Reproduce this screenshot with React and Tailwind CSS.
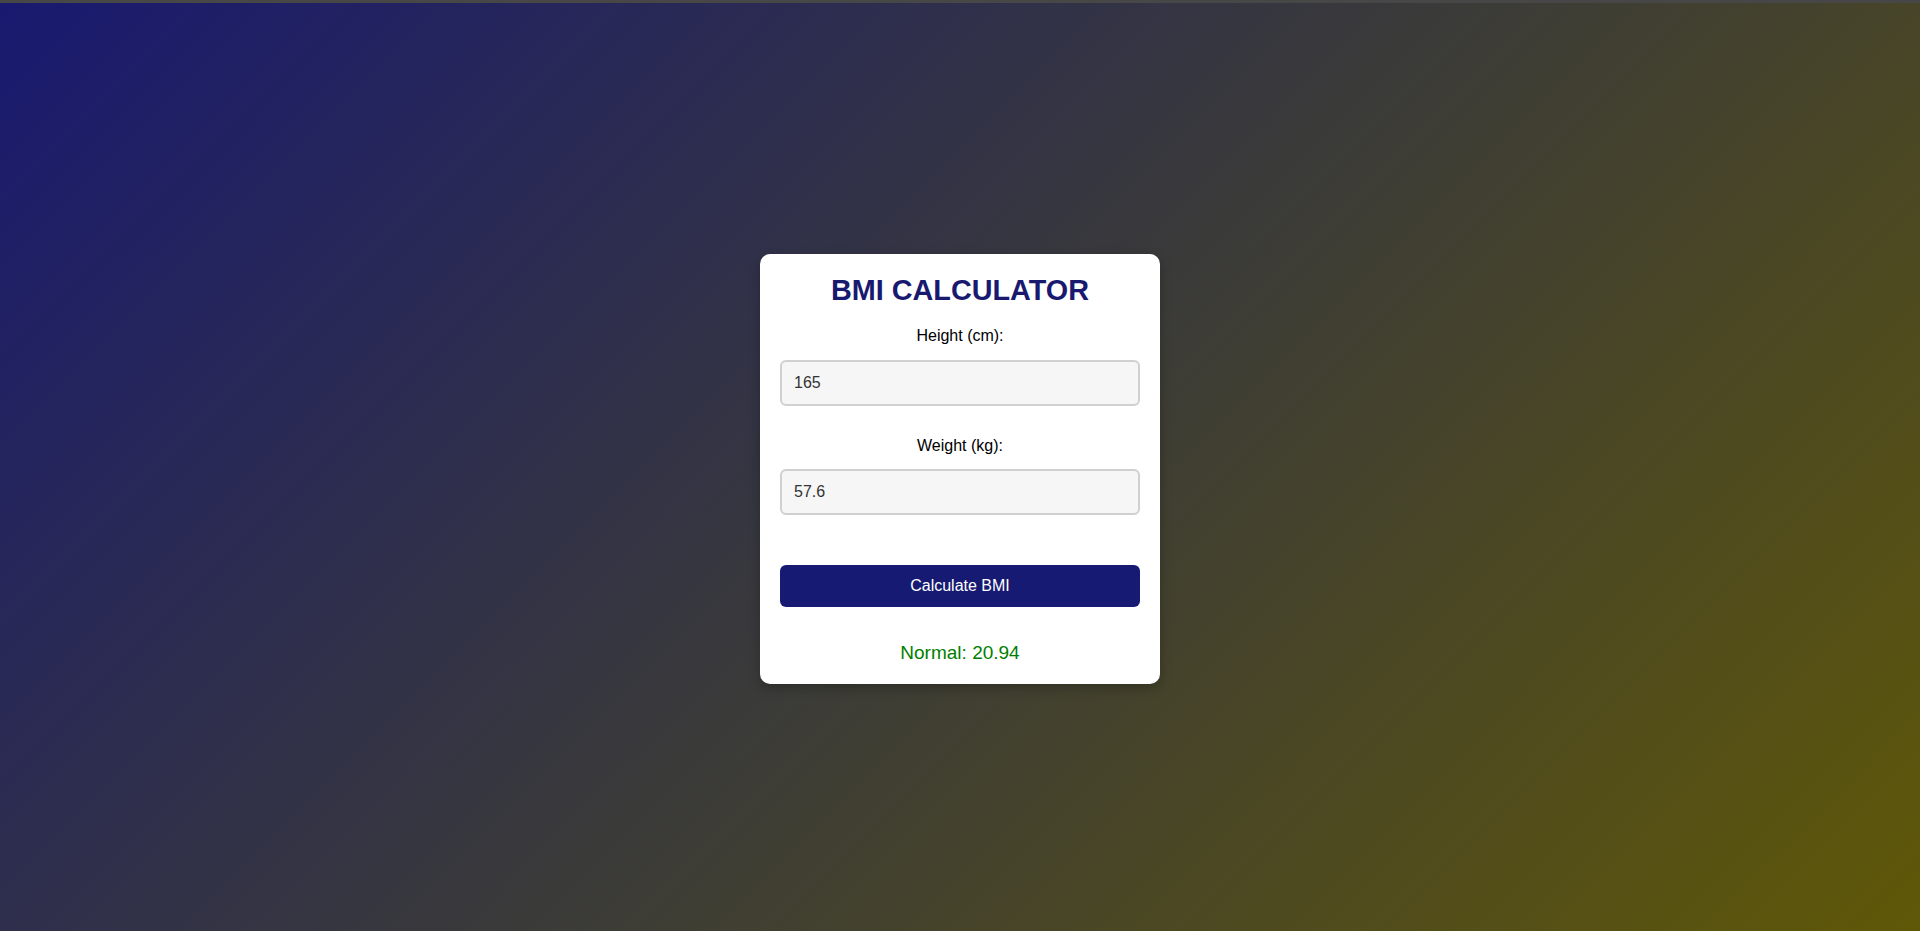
import React, { useState } from 'react';

function App() {
  const [height, setHeight] = useState('165');
  const [weight, setWeight] = useState('57.6');
  const [result, setResult] = useState({ label: 'Normal', value: '20.94', color: 'text-[#008000]' });

  const calculate = () => {
    const h = parseFloat(height) / 100;
    const w = parseFloat(weight);
    if (!h || !w) return;
    const bmi = w / (h * h);
    let label = 'Normal';
    let color = 'text-[#008000]';
    if (bmi < 18.5) {
      label = 'Underweight';
      color = 'text-[#d97706]';
    } else if (bmi >= 25 && bmi < 30) {
      label = 'Overweight';
      color = 'text-[#d97706]';
    } else if (bmi >= 30) {
      label = 'Obese';
      color = 'text-[#dc2626]';
    }
    setResult({ label, value: bmi.toFixed(2), color });
  };

  return (
    <div className="min-h-screen flex flex-col font-['Liberation_Sans',Arial,sans-serif]">
      <div className="h-[3px] bg-[#474747]" />
      <div className="flex-1 flex items-center justify-center pt-[4px] bg-[linear-gradient(135deg,#191970_0%,#3a3a3a_50%,#5f5808_100%)]">
        <div className="w-[400px] bg-white rounded-[10px] p-5 shadow-[0_4px_12px_rgba(0,0,0,0.25)] text-center">
          <h1 className="text-[28.8px] leading-[32px] font-bold text-[#191970] mb-[21px]">BMI CALCULATOR</h1>

          {/* Inputs */}
          <label className="block text-base leading-[18px] text-black mb-[15px]">Height (cm):</label>
          <input
            type="text"
            value={height}
            onChange={(e) => setHeight(e.target.value)}
            className="block w-full h-[46px] px-[12px] text-base text-[#333] bg-[#f6f6f6] border-2 border-[#d0d0d0] rounded-[6px] outline-none"
          />

          <label className="block text-base leading-[18px] text-black mt-[31px] mb-[14px]">Weight (kg):</label>
          <input
            type="text"
            value={weight}
            onChange={(e) => setWeight(e.target.value)}
            className="block w-full h-[46px] px-[12px] text-base text-[#333] bg-[#f6f6f6] border-2 border-[#d0d0d0] rounded-[6px] outline-none"
          />

          <button
            onClick={calculate}
            className="block w-full h-[42px] mt-[50px] bg-[#161a72] text-white text-base rounded-[6px] cursor-pointer"
          >
            Calculate BMI
          </button>

          {/* Result */}
          <p className={`mt-[35px] text-[19px] leading-[22px] ${result.color}`}>
            {result.label}: {result.value}
          </p>
        </div>
      </div>
    </div>
  );
}

export default App;
